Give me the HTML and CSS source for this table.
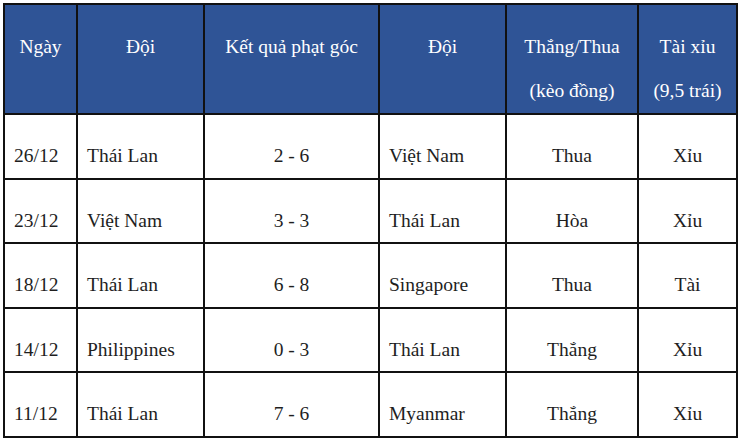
FILE: index.html
```html
<!DOCTYPE html>
<html lang="vi">
<head>
<meta charset="utf-8">
<link rel="stylesheet" href="styles.css">
</head>
<body>
<table class="stats">
  <colgroup>
    <col class="c1"><col class="c2"><col class="c3"><col class="c4"><col class="c5"><col class="c6">
  </colgroup>
  <thead>
    <tr>
      <th>Ngày</th>
      <th>Đội</th>
      <th>Kết quả phạt góc</th>
      <th>Đội</th>
      <th>Thắng/Thua<br>(kèo đồng)</th>
      <th>Tài xỉu<br>(9,5 trái)</th>
    </tr>
  </thead>
  <tbody>
    <tr><td class="left">26/12</td><td class="left">Thái Lan</td><td>2 - 6</td><td class="left">Việt Nam</td><td>Thua</td><td>Xỉu</td></tr>
    <tr><td class="left">23/12</td><td class="left">Việt Nam</td><td>3 - 3</td><td class="left">Thái Lan</td><td>Hòa</td><td>Xỉu</td></tr>
    <tr><td class="left">18/12</td><td class="left">Thái Lan</td><td>6 - 8</td><td class="left">Singapore</td><td>Thua</td><td>Tài</td></tr>
    <tr><td class="left">14/12</td><td class="left">Philippines</td><td>0 - 3</td><td class="left">Thái Lan</td><td>Thắng</td><td>Xỉu</td></tr>
    <tr><td class="left">11/12</td><td class="left">Thái Lan</td><td>7 - 6</td><td class="left">Myanmar</td><td>Thắng</td><td>Xỉu</td></tr>
  </tbody>
</table>
</body>
</html>
```
FILE: styles.css
```css
html, body {
  margin: 0;
  padding: 0;
  background: #ffffff;
}
body {
  padding: 3px 0 0 3px;
  font-family: "Liberation Serif", "Times New Roman", serif;
}
.stats {
  border-collapse: collapse;
  table-layout: fixed;
  width: 733px;
  font-size: 19.5px;
}
.c1 { width: 73px; }
.c2 { width: 127px; }
.c3 { width: 175px; }
.c4 { width: 127px; }
.c5 { width: 132px; }
.c6 { width: 99px; }
.stats th,
.stats td {
  border: 2px solid #111111;
  vertical-align: top;
  text-align: center;
  white-space: nowrap;
}
.stats th {
  background: #2f5496;
  color: #ffffff;
  font-weight: normal;
  line-height: 44px;
  padding: 20px 9px 0 9px;
}
.stats td {
  color: #1e1e1e;
  line-height: 42px;
  padding: 20px 9px 0.6px 9px;
}
.stats td.left {
  text-align: left;
}
```
